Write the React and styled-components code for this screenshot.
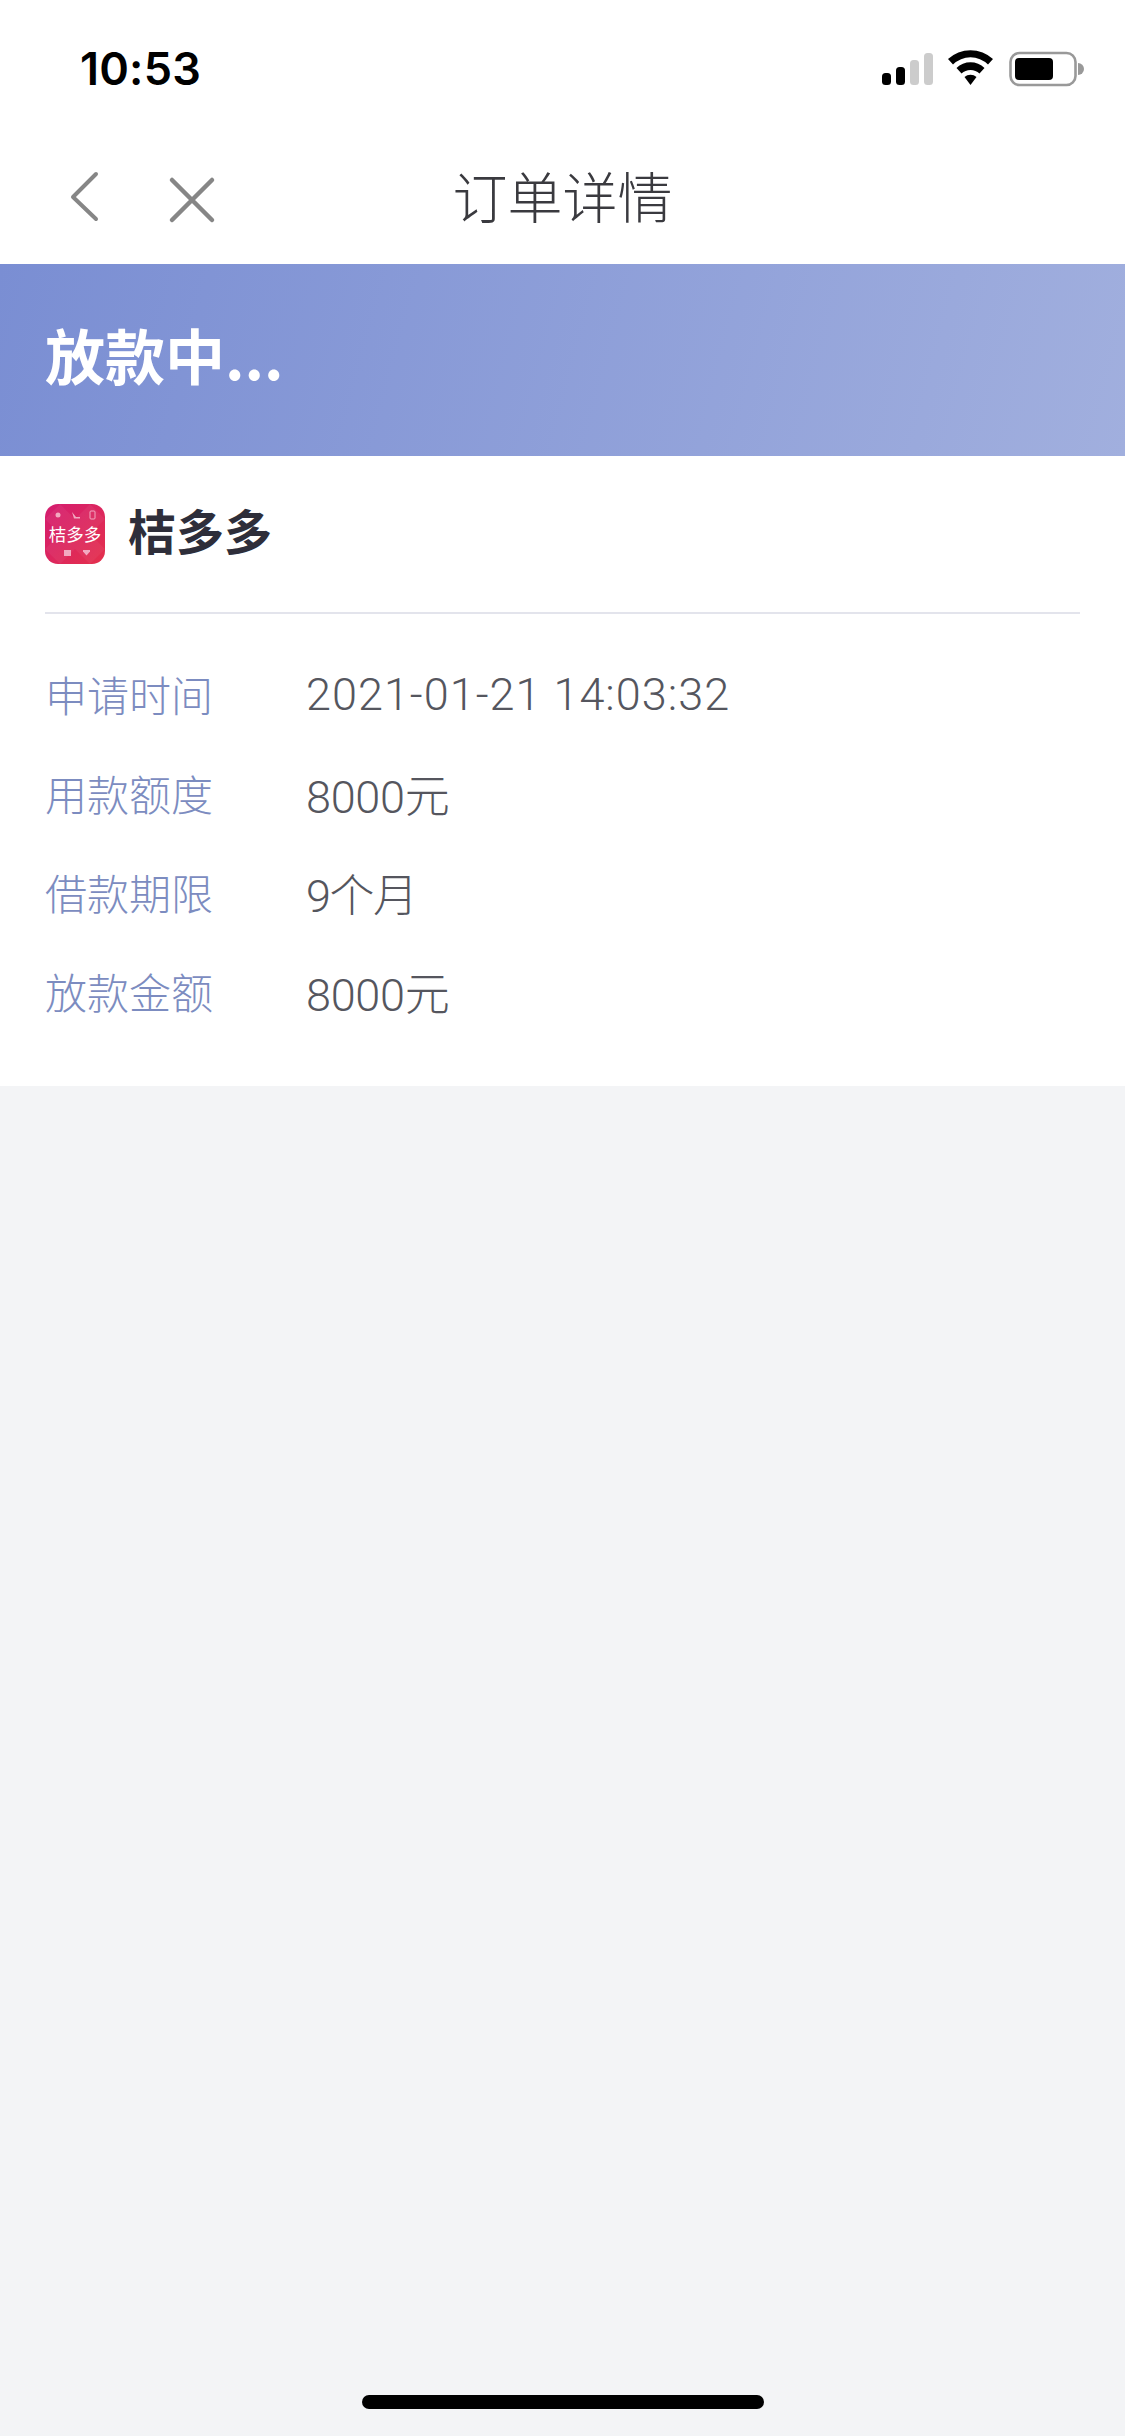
import styled, { createGlobalStyle } from 'styled-components'

const GlobalStyle = createGlobalStyle`
html, body {
    margin: 0;
    padding: 0;
    background: #f3f4f6;
}
* {
    box-sizing: border-box;
}
`

const Page = styled.div`
width: 1125px;
height: 2436px;
background: #f3f4f6;
display: flex;
flex-direction: column;
font-family: Inter, "Noto Sans CJK SC", sans-serif;
position: relative;
overflow: hidden;
`

const StatusBar = styled.div`
height: 132px;
background: #fff;
padding: 0 40px 0 80px;
display: flex;
align-items: center;
justify-content: space-between;
`

const Clock = styled.div`
font-family: Inter, sans-serif;
font-size: 45px;
font-weight: 600;
color: #000;
position: relative;
top: 2px;
letter-spacing: 0.2px;
`

const StatusIcons = styled.svg`
width: 205px;
height: 50px;
display: block;
`

const NavBar = styled.div`
height: 132px;
background: #fff;
position: relative;
display: flex;
align-items: center;
justify-content: center;
`

const NavTitle = styled.div`
font-family: "Noto Sans CJK SC", sans-serif;
font-size: 55px;
font-weight: 300;
color: #3a3a3f;
position: relative;
top: -4px;
`

const NavIcon = styled.svg`
position: absolute;
left: ${p => p.$left}px;
top: ${p => p.$top}px;
width: ${p => p.$w}px;
height: ${p => p.$h}px;
`

const Banner = styled.div`
height: 192px;
background: linear-gradient(105deg, #7a8ed3 0%, #a1afde 100%);
padding: 0 0 13px 45px;
display: flex;
align-items: center;
`

const BannerText = styled.div`
font-family: "Noto Sans CJK SC", sans-serif;
font-size: 60px;
font-weight: 700;
color: #fff;
`

const Card = styled.div`
background: #fff;
padding: 0 45px;
height: 630px;
`

const AppRow = styled.div`
height: 158px;
border-bottom: 2px solid #e3e4ec;
display: flex;
align-items: flex-start;
padding-top: 48px;
gap: 23px;
`

const AppLogo = styled.div`
width: 60px;
height: 60px;
border-radius: 13px;
overflow: hidden;
position: relative;
background: linear-gradient(135deg, #d41c70 0%, #e4304c 100%);
display: flex;
align-items: center;
justify-content: center;
`

const LogoBg = styled.svg`
position: absolute;
left: 0;
top: 0;
width: 60px;
height: 60px;
`

const LogoText = styled.span`
font-family: "Noto Sans CJK SC", sans-serif;
font-size: 17.5px;
font-weight: 400;
color: #fff;
position: relative;
white-space: nowrap;
top: -1px;
`

const AppName = styled.div`
font-family: "Noto Sans CJK SC", sans-serif;
font-size: 48px;
font-weight: 700;
color: #2e2e3a;
line-height: 60px;
position: relative;
top: -5px;
`

const Rows = styled.div`
padding-top: 30px;
display: flex;
flex-direction: column;
`

const Row = styled.div`
height: 99px;
display: flex;
align-items: center;
`

const Label = styled.div`
width: 261px;
font-family: "Noto Sans CJK SC", sans-serif;
font-size: 42px;
font-weight: 300;
color: #7c8cc0;
`

const Value = styled.div`
font-family: Roboto, "Noto Sans CJK SC", sans-serif;
font-size: 45px;
font-weight: 300;
color: #55565e;
letter-spacing: ${p => p.$tracking || 0}px;
position: relative;
top: 1px;
`

const HomeBar = styled.div`
position: absolute;
left: 362px;
bottom: 27px;
width: 402px;
height: 14px;
border-radius: 7px;
background: #000;
`

const rows = [
    { label: '申请时间', value: '2021-01-21 14:03:32', tracking: 1 },
    { label: '用款额度', value: '8000元', tracking: -0.3 },
    { label: '借款期限', value: '9个月', tracking: -1.5 },
    { label: '放款金额', value: '8000元', tracking: -0.3 },
]

const App = () => {
    return (
        <>
            <GlobalStyle />
            <Page>
                <StatusBar>
                    <Clock>10:53</Clock>
                    <StatusIcons viewBox="0 0 205 50">
                        <rect x="2" y="32" width="9" height="12" rx="3.5" fill="#000" />
                        <rect x="16" y="26" width="9" height="18" rx="3.5" fill="#000" />
                        <rect x="30" y="19" width="9" height="25" rx="3.5" fill="#ccc" />
                        <rect x="44" y="12" width="9" height="32" rx="3.5" fill="#ccc" />
                        <path d="M68 18 a33 33 0 0 1 45 0 l-5 5.5 a25 25 0 0 0 -35 0 Z" fill="#000" />
                        <path d="M76.500 27 a20 20 0 0 1 28 0 l-5 5.500 a13 13 0 0 0 -18 0 Z" fill="#000" />
                        <path d="M84.500 36 a9 9 0 0 1 12 0 l-6 8 Z" fill="#000" />
                        <rect x="130.500" y="12" width="65" height="32" rx="9" fill="none" stroke="#999" strokeWidth="2.6" />
                        <rect x="135" y="17" width="38" height="22" rx="4" fill="#000" />
                        <path d="M198 22 a6 6 0 0 1 0 12 Z" fill="#999" />
                    </StatusIcons>
                </StatusBar>

                <NavBar>
                    <NavIcon $left={66} $top={38} $w={36} $h={56} viewBox="0 0 36 56" fill="none">
                        <path d="M30 4 L7 27 L30 49" stroke="#868686" strokeWidth="4" strokeLinecap="round" strokeLinejoin="round" />
                    </NavIcon>
                    <NavIcon $left={168} $top={44} $w={48} $h={48} viewBox="0 0 48 48" fill="none">
                        <path d="M4 4 L44 44 M44 4 L4 44" stroke="#868686" strokeWidth="4.500" strokeLinecap="round" />
                    </NavIcon>
                    <NavTitle>订单详情</NavTitle>
                </NavBar>

                <Banner>
                    <BannerText>放款中...</BannerText>
                </Banner>

                <Card>
                    <AppRow>
                        <AppLogo>
                            <LogoBg viewBox="0 0 60 60" fill="none">
                                <path d="M0 15 L15 0 L30 15 L45 0 L60 15 L45 30 L60 45 L45 60 L30 45 L15 60 L0 45 L15 30 Z" fill="#fff" opacity="0.05" />
                                <circle cx="13" cy="11" r="2.500" fill="#f2a9c0" />
                                <path d="M27 8 L31 13 L35 13 L35 14.500 L29 14.500 Z" fill="#f2a9c0" />
                                <rect x="45" y="7" width="5" height="8" rx="1" stroke="#f2a9c0" strokeWidth="1" />
                                <rect x="19" y="46" width="7" height="6" fill="#f2a9c0" />
                                <path d="M38 46 h7 v1.500 l-3.500 4 -3.500 -4 Z" fill="#f2a9c0" />
                            </LogoBg>
                            <LogoText>桔多多</LogoText>
                        </AppLogo>
                        <AppName>桔多多</AppName>
                    </AppRow>
                    <Rows>
                        {rows.map(row => (
                            <Row key={row.label}>
                                <Label>{row.label}</Label>
                                <Value $tracking={row.tracking}>{row.value}</Value>
                            </Row>
                        ))}
                    </Rows>
                </Card>

                <HomeBar />
            </Page>
        </>
    )
};

export default App;
